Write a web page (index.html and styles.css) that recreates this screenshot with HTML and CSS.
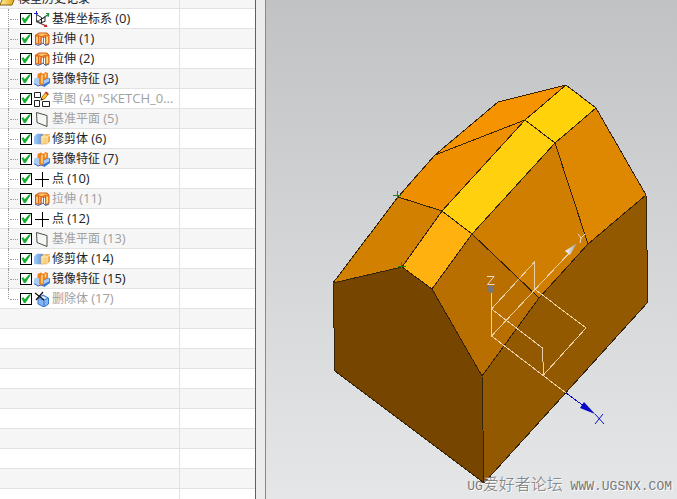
FILE: index.html
```
<!DOCTYPE html>
<html lang="zh-CN">
<head>
<meta charset="utf-8">
<title>模型历史记录</title>
<link rel="stylesheet" href="styles.css">
</head>
<body>
<svg class="sprite" aria-hidden="true">
  <defs>
    <linearGradient id="orange" x1="0" x2="1"><stop offset="0" stop-color="#f08a1c"/><stop offset=".5" stop-color="#ffd27a"/><stop offset="1" stop-color="#f39a25"/></linearGradient>
    <linearGradient id="blue" x1="0" x2="1"><stop offset="0" stop-color="#a9cdf5"/><stop offset="1" stop-color="#4f8fe0"/></linearGradient>
    <linearGradient id="gold" x1="0" x2="1"><stop offset="0" stop-color="#ffe9b0"/><stop offset="1" stop-color="#f2a93c"/></linearGradient>
    <linearGradient id="folder" x1="0" x2="1"><stop offset="0" stop-color="#fff0a0"/><stop offset="1" stop-color="#e09a00"/></linearGradient>
  </defs>
  <symbol id="i-csys" viewBox="0 0 16 16">
    <path d="M2.500 3v8l10 4M2.500 11L14 4" fill="none" stroke="#555"/>
    <path d="M2.500 3.500l5 3v6l-5-3M6 9l5-3v4.500l-4 1" fill="none" stroke="#222"/>
    <path d="M0 2.500h4M2.500 0v4" stroke="#2020d0"/>
    <path d="M10 6l5-3M12 2.500h3L14 6" fill="none" stroke="#178a36"/>
    <path d="M8 13l4 2M10 15.500h3l-1-2" fill="none" stroke="#c92828"/>
  </symbol>
  <symbol id="i-extrude" viewBox="0 0 16 16">
    <path d="M1.500 4L5 2h8l2 2v8.500l-3.500 1.500V7l-2-1.500L7 7v6.500l-5.500-1z" fill="url(#orange)" stroke="#d25a14"/>
    <path d="M2 4l5 1.500L11.500 4.500 15 4M4.500 5v8M7 5.500V13M9.500 5v8M11.500 5v9" fill="none" stroke="#d9641b"/>
    <path d="M3 6v6M13.300 6v6" stroke="#ffe09a" stroke-width="1.300"/>
    <path d="M1 13l3 1.500L7.500 13 9 12l2.500 2.500L15 13" fill="none" stroke="#4467a5"/>
  </symbol>
  <symbol id="i-mirror" viewBox="0 0 16 16">
    <path d="M0 8l4-2 3 2v6l-3 1-4-3z" fill="#a9cdf6"/>
    <path d="M8 9l5-3 3 1.500V12l-5 3.500-3-2z" fill="#3d77d2"/>
    <path d="M9.500 9.500L15 7v3.500l-5 2.500z" fill="#a6cbf9"/>
    <path d="M3.500 3L7 1.500 9 3l2.500-2L14 2v5l-4 2v4l-3 1.500-2-2V7H3.500z" fill="#f08220"/>
    <path d="M8 4v8.500M11.500 2.500v4" fill="none" stroke="#ffd47a" stroke-width="1.600"/>
    <path d="M0 12.500l4 2.500 3-1 4 1.500" fill="none" stroke="#3c67b8"/>
  </symbol>
  <symbol id="i-sketch" viewBox="0 0 16 16">
    <path d="M.500 1.500h6v5h-6zM.500 9.500h5v6h-5zM8.500 10.500h7v5h-7z" fill="#fff" stroke="#222"/>
    <path d="M7 9l1-3 4-5 2.500 2-4 5z" fill="#ffc52a" stroke="#7c5510" stroke-width=".7"/>
    <path d="M11 2l1-1.500 2.500 2-1 1.500z" fill="#d3272c"/><path d="M6.500 9.500l1-2.500 1.500 1.500z" fill="#111"/>
  </symbol>
  <symbol id="i-plane" viewBox="0 0 16 16"><path d="M2.500 1.500L13 4.500v11L3 11.500z" fill="#f5f7f3" stroke="#4b504b"/></symbol>
  <symbol id="i-trim" viewBox="0 0 16 16">
    <path d="M0 6l3-3h6v10H2q-2 0-2-2z" fill="url(#blue)" stroke="#8baed7" stroke-width=".5"/>
    <path d="M7 6l3-2.500h6V10l-3 3H7z" fill="url(#gold)" stroke="#e09a38" stroke-width=".5"/>
    <path d="M7 6h6v7M13 6l3-2" fill="none" stroke="#ffedbd"/>
  </symbol>
  <symbol id="i-point" viewBox="0 0 16 16"><path d="M1 8.500h14M8.500 1v15" stroke="#000" shape-rendering="crispEdges"/></symbol>
  <symbol id="i-delete" viewBox="0 0 16 16">
    <path d="M4 7l5-3 5.500 3v6L10 16l-6-3z" fill="#84b5f2" stroke="#3472cf"/>
    <path d="M4 7l6 2 4-2M10 9v7" fill="none" stroke="#3472cf"/><path d="M5 7l4-2 4 2-3 1.500z" fill="#d6e9ff"/>
    <path d="M1 2l9 7M9 1L2 9" stroke="#111" stroke-width="1.200"/>
  </symbol>
  <symbol id="i-folder" viewBox="0 0 16 16"><path d="M0 14L4 4h12l-4 10z" fill="url(#folder)" stroke="#8c6100"/></symbol>
</svg>
<div class="app">
  <aside class="navigator">
    <table class="tree" aria-label="模型历史记录">
      <colgroup><col class="col-name"><col></colgroup>
      <tbody>
        <tr><th scope="row"><div class="root"><svg class="icon"><use href="#i-folder"/></svg>模型历史记录</div></th><td></td></tr>
        <tr><td><label class="node"><span class="branch"></span><input type="checkbox" checked><svg class="icon"><use href="#i-csys"/></svg>基准坐标系 <span class="num">(0)</span></label></td><td></td></tr>
        <tr><td><label class="node"><span class="branch"></span><input type="checkbox" checked><svg class="icon"><use href="#i-extrude"/></svg>拉伸 <span class="num">(1)</span></label></td><td></td></tr>
        <tr><td><label class="node"><span class="branch"></span><input type="checkbox" checked><svg class="icon"><use href="#i-extrude"/></svg>拉伸 <span class="num">(2)</span></label></td><td></td></tr>
        <tr><td><label class="node"><span class="branch"></span><input type="checkbox" checked><svg class="icon"><use href="#i-mirror"/></svg>镜像特征 <span class="num">(3)</span></label></td><td></td></tr>
        <tr><td><label class="node muted"><span class="branch"></span><input type="checkbox" checked><svg class="icon"><use href="#i-sketch"/></svg>草图 <span class="num">(4) "SKETCH_0...</span></label></td><td></td></tr>
        <tr><td><label class="node muted"><span class="branch"></span><input type="checkbox" checked><svg class="icon"><use href="#i-plane"/></svg>基准平面 <span class="num">(5)</span></label></td><td></td></tr>
        <tr><td><label class="node"><span class="branch"></span><input type="checkbox" checked><svg class="icon"><use href="#i-trim"/></svg>修剪体 <span class="num">(6)</span></label></td><td></td></tr>
        <tr><td><label class="node"><span class="branch"></span><input type="checkbox" checked><svg class="icon"><use href="#i-mirror"/></svg>镜像特征 <span class="num">(7)</span></label></td><td></td></tr>
        <tr><td><label class="node"><span class="branch"></span><input type="checkbox" checked><svg class="icon"><use href="#i-point"/></svg>点 <span class="num">(10)</span></label></td><td></td></tr>
        <tr><td><label class="node muted"><span class="branch"></span><input type="checkbox" checked><svg class="icon"><use href="#i-extrude"/></svg>拉伸 <span class="num">(11)</span></label></td><td></td></tr>
        <tr><td><label class="node"><span class="branch"></span><input type="checkbox" checked><svg class="icon"><use href="#i-point"/></svg>点 <span class="num">(12)</span></label></td><td></td></tr>
        <tr><td><label class="node muted"><span class="branch"></span><input type="checkbox" checked><svg class="icon"><use href="#i-plane"/></svg>基准平面 <span class="num">(13)</span></label></td><td></td></tr>
        <tr><td><label class="node"><span class="branch"></span><input type="checkbox" checked><svg class="icon"><use href="#i-trim"/></svg>修剪体 <span class="num">(14)</span></label></td><td></td></tr>
        <tr><td><label class="node"><span class="branch"></span><input type="checkbox" checked><svg class="icon"><use href="#i-mirror"/></svg>镜像特征 <span class="num">(15)</span></label></td><td></td></tr>
        <tr><td><label class="node muted"><span class="branch last"></span><input type="checkbox" checked><svg class="icon"><use href="#i-delete"/></svg>删除体 <span class="num">(17)</span></label></td><td></td></tr>
        <tr><td></td><td></td></tr>
        <tr><td></td><td></td></tr>
        <tr><td></td><td></td></tr>
        <tr><td></td><td></td></tr>
        <tr><td></td><td></td></tr>
        <tr><td></td><td></td></tr>
        <tr><td></td><td></td></tr>
        <tr><td></td><td></td></tr>
        <tr><td></td><td></td></tr>
        <tr><td></td><td></td></tr>
      </tbody>
    </table>
  </aside>
  <div class="splitter"></div>
  <main class="viewport">
    <svg class="scene" viewBox="266 0 411 499" role="img" aria-label="实体模型">
      <defs>
        <linearGradient id="cone" x1="0" x2="1"><stop offset="0" stop-color="#fff"/><stop offset="1" stop-color="#999"/></linearGradient>
      </defs>
      <g class="solid">
        <path fill="#764600" d="M333 283L402 267L432 289L482 376L484 483L335 371Z"/>
        <path fill="#925900" d="M482 376L539 298L588 244L646 195L648 302L484 483Z"/>
        <path fill="#d28000" d="M333 283L398 197L442 211L402 267Z"/>
        <path fill="#ffb110" d="M402 267L442 211L472 234L432 289Z"/>
        <path fill="#b86f00" d="M432 289L472 234L539 298L482 376Z"/>
        <path fill="#ee8f00" d="M398 197L435 155L525 120L442 211Z"/>
        <path fill="#f59300" d="M435 155L498 102L566 85L525 120Z"/>
        <path fill="#ffd00e" d="M442 211L525 120L555 143L472 234Z"/>
        <path fill="#ffd20a" d="M525 120L566 85L596 108L555 143Z"/>
        <path fill="#cf7e00" d="M472 234L555 143L588 244L539 298Z"/>
        <path fill="#de8700" d="M555 143L596 108L646 195L588 244Z"/>
      </g>
      <path class="marker" d="M393 195.500h8M397.500 191v8M398 266.500h8M401.500 262v8"/>
      <g class="wire">
        <path d="M491.500 290V336L573 249"/>
        <path d="M491.500 309L534.500 262V289L586 328L543.500 375L542.500 348L491.500 309"/>
        <path d="M491.500 336L566 393"/>
      </g>
      <path fill="#777" d="M488 286h6v5l-2 2h-2l-2-2z"/>
      <path fill="url(#cone)" d="M577 243L570 255L565 251Z"/>
      <path class="xaxis" d="M566 393L592 412"/>
      <path fill="#0808c8" d="M595 414L580 408L584 402Z"/>
      <path class="zlabel" d="M487 276.500h7L487.500 284.500h7"/>
      <path class="ylabel" d="M578 234l3 4 4-4M581 238l-1 5"/>
      <path class="xlabel" d="M595 414l9 10M603 414l-8 10"/>
    </svg>
    <div class="watermark">UG<span>爱好者论坛</span> WWW.UGSNX.COM</div>
  </main>
</div>
</body>
</html>
```
FILE: styles.css
```
* { box-sizing: border-box; }
body {
  margin: 0;
  font: 12px/19px "Open Sans", "Noto Sans CJK SC", sans-serif;
  color: #222;
}
.sprite { position: absolute; width: 0; height: 0; }
.app { display: flex; height: 100vh; overflow: hidden; }

.navigator {
  flex: 0 0 256px;
  overflow: hidden;
  background: #fff;
  border-right: 1px solid #606060;
}
/* The list is scrolled down by half a row */
.tree {
  width: 100%;
  margin-top: -11px;
  table-layout: fixed;
  border-collapse: separate;
  border-spacing: 0;
}
.col-name { width: 180px; }
.tree tr { height: 20px; }
.tree tr:nth-child(odd) { background: #f6f6f6; }
.tree td, .tree th {
  padding: 0;
  height: 20px;
  font-weight: normal;
  text-align: left;
  border-bottom: 1px solid #e2e2e2;
}
.tree td:first-child, .tree th { border-right: 1px solid #e2e2e2; }
.root, .node {
  display: flex;
  align-items: center;
  height: 19px;
  white-space: pre;
}
.icon { flex: none; width: 16px; height: 16px; margin-right: 2px; }
.node .icon { margin-left: 2px; }
.num { font-size: 13px; }
.muted { color: #a0a0a0; }

.branch {
  align-self: flex-start;
  width: 12px;
  height: 20px;
  margin-left: 8px;
  border-left: 1px dotted #999;
}
.branch::before {
  content: "";
  display: block;
  width: 8px;
  height: 10px;
  margin-left: 1px;
  border-bottom: 1px dotted #999;
}
.branch.last { height: 10px; }

input {
  appearance: none;
  flex: none;
  width: 12px;
  height: 12px;
  margin: 0;
  border: 1px solid #000;
  background: #fff;
}
input:checked::before {
  content: "";
  display: block;
  height: 10px;
  background: #12b02c;
  clip-path: polygon(5% 45%, 25% 38%, 38% 58%, 80% 10%, 100% 10%, 45% 95%, 28% 95%);
}

.splitter { flex: 0 0 10px; background: #ececec; border-right: 1px solid #888; }

.viewport {
  position: relative;
  flex: 1;
  min-width: 0;
  background: linear-gradient(#c1c2c4, #d4d5d6 50%, #e5e6e8);
}
.scene { display: block; width: 100%; height: 100%; }
.solid path { stroke: #33230d; stroke-width: 1; stroke-linejoin: round; shape-rendering: crispEdges; }
.marker { stroke: #1c8a10; shape-rendering: crispEdges; }
.wire path { fill: none; stroke: #e8cfa8; shape-rendering: crispEdges; }
.xaxis { stroke: #0808c8; shape-rendering: crispEdges; }
.zlabel, .ylabel, .xlabel { fill: none; stroke: #e6dccb; }
.xlabel { stroke: #1010c8; }
.watermark {
  position: absolute;
  right: 5px;
  bottom: 2px;
  font: 13px/20px "Liberation Mono", "Noto Sans CJK SC", monospace;
  color: #787878;
  text-shadow: 1px 1px #fff;
  white-space: nowrap;
}
.watermark span { font-size: 16px; font-weight: 300; }
```
